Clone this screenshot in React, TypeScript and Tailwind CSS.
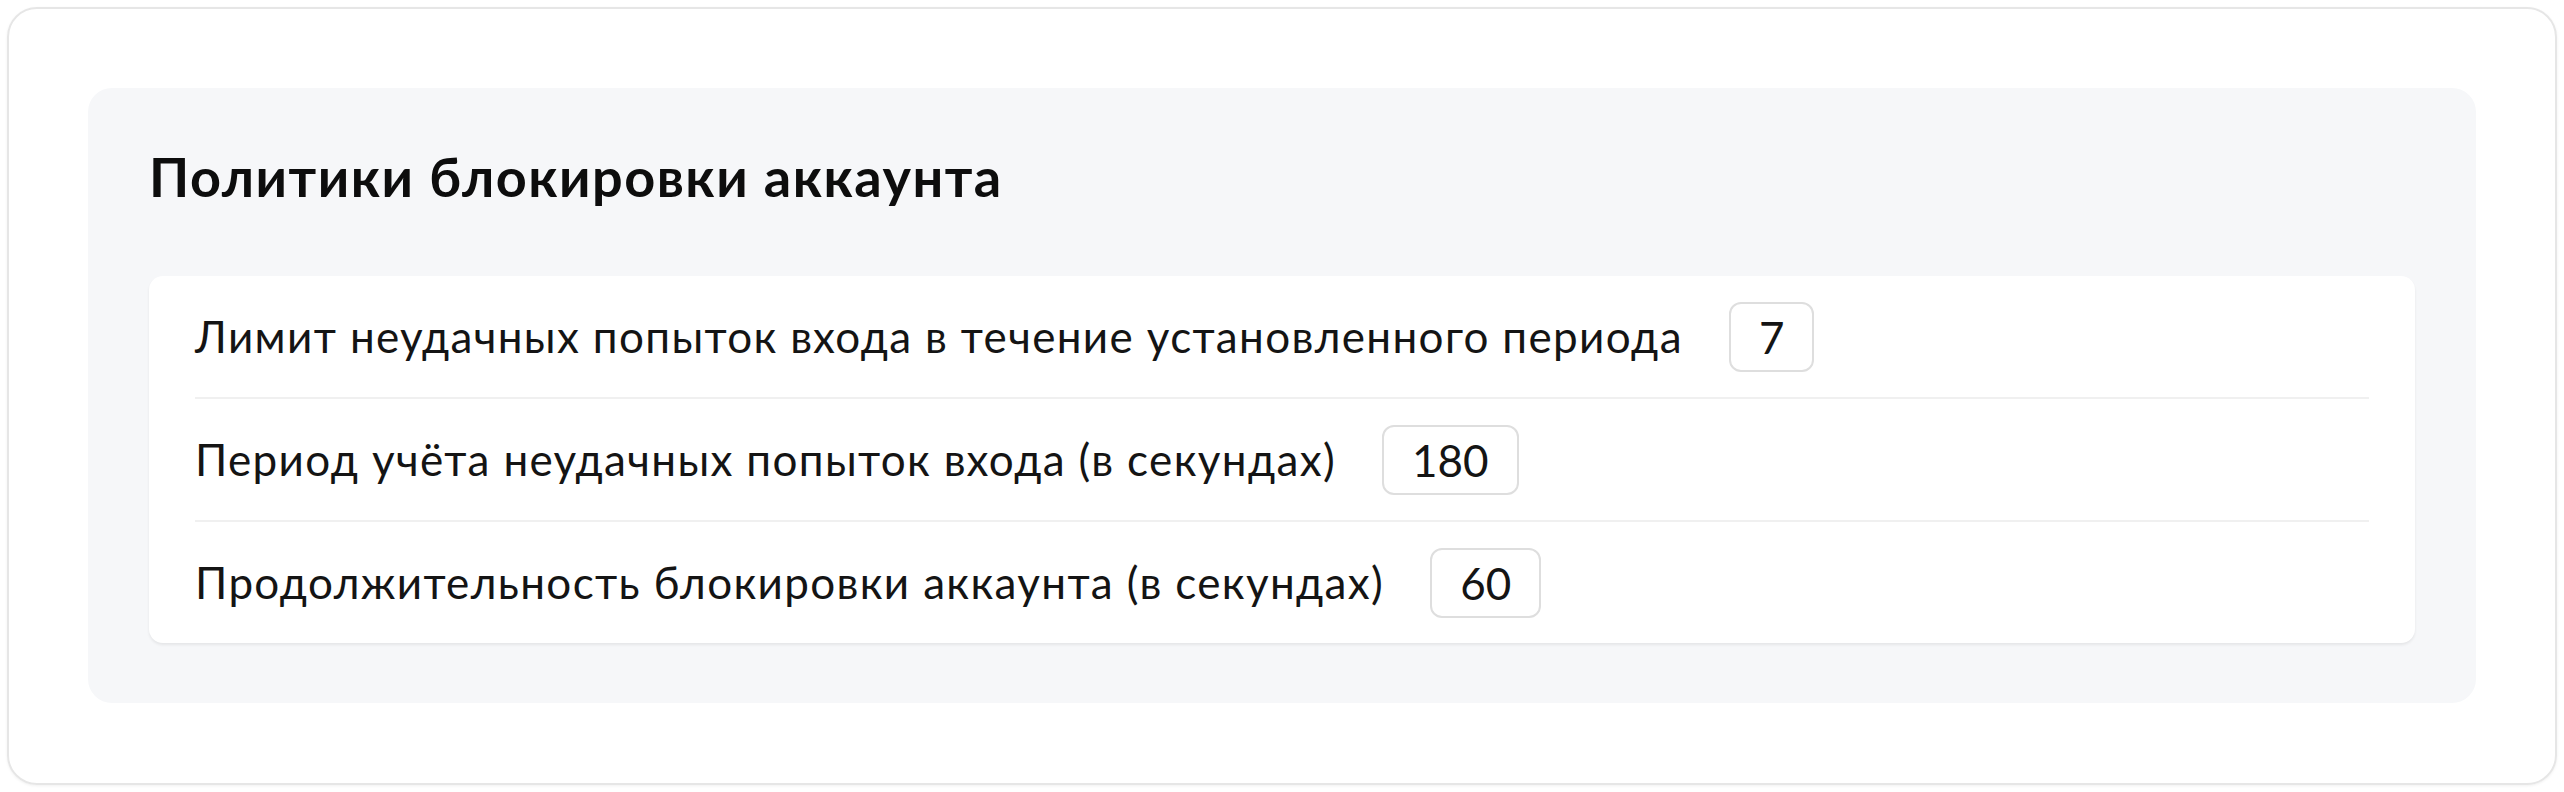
const rows = [
  { label: "Лимит неудачных попыток входа в течение установленного периода", value: "7" },
  { label: "Период учёта неудачных попыток входа (в секундах)", value: "180" },
  { label: "Продолжительность блокировки аккаунта (в секундах)", value: "60" },
];

export default function App() {
  return (
    <div className="h-[792px] w-[2564px] bg-white p-[7px] font-['Lato',sans-serif] text-[#141414]">
      <div className="h-full rounded-[30px] border-2 border-[#e6e6e6] p-[79px] shadow-[0_1px_3px_rgba(0,0,0,0.06)]">
        <section className="rounded-[24px] bg-[#f6f7f9] px-[61px] pb-[60px] pt-[57px]">
          <h1 className="mb-[67px] text-[54px] font-bold leading-[64px] tracking-[1.5px] text-[#0d0d0d]">
            Политики блокировки аккаунта
          </h1>

          <div className="rounded-[14px] bg-white px-[46px] shadow-[0_2px_3px_rgba(0,0,0,0.07)]">
            {rows.map((row, i) => (
              <div
                key={row.label}
                className={
                  i < rows.length - 1
                    ? "flex h-[123px] items-center gap-[46px] border-b-2 border-[#f0f0f0]"
                    : "flex h-[121px] items-center gap-[46px]"
                }
              >
                <span className="text-[44px] leading-[53px] tracking-[1.35px]">{row.label}</span>
                <span className="flex h-[70px] items-center rounded-[12px] border-2 border-[#dedede] px-[28px] text-[44px] leading-none">
                  {row.value}
                </span>
              </div>
            ))}
          </div>
        </section>
      </div>
    </div>
  );
}
